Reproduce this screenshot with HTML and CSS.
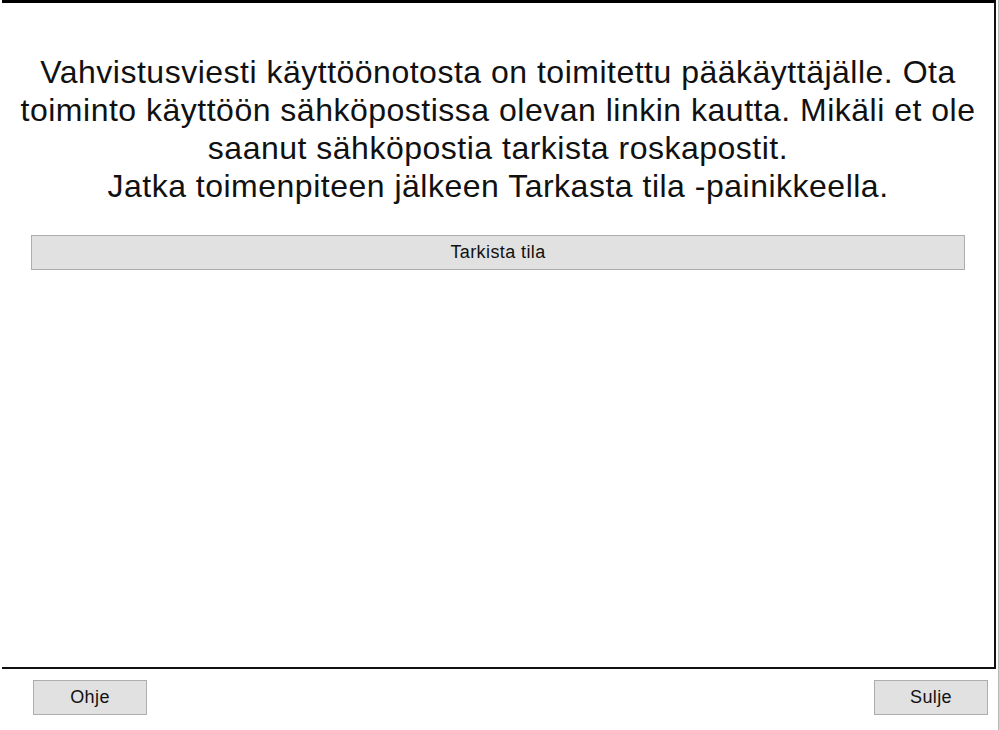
FILE: index.html
```html
<!DOCTYPE html>
<html lang="fi">
<head>
<meta charset="utf-8">
<title>Vahvistus</title>
<link rel="stylesheet" href="styles.css">
</head>
<body>
<div class="window">
  <div class="panel">
    <p class="message">Vahvistusviesti käyttöönotosta on toimitettu pääkäyttäjälle. Ota toiminto käyttöön sähköpostissa olevan linkin kautta. Mikäli et ole saanut sähköpostia tarkista roskapostit.<br>Jatka toimenpiteen jälkeen Tarkasta tila -painikkeella.</p>
    <button class="btn btn-wide" type="button">Tarkista tila</button>
  </div>
  <div class="footer">
    <button class="btn btn-small" type="button">Ohje</button>
    <button class="btn btn-small" type="button">Sulje</button>
  </div>
</div>
</body>
</html>
```

FILE: styles.css
```css
html, body {
  margin: 0;
  padding: 0;
  background: #fff;
}

body {
  font-family: "Liberation Sans", Arial, sans-serif;
  color: #000;
}

.window {
  width: 999px;
  height: 730px;
  box-sizing: border-box;
  border-right: 1px solid #b8b8b8;
  display: flex;
  flex-direction: column;
}

.panel {
  margin-left: 2px;
  width: 994px;
  height: 669px;
  box-sizing: border-box;
  border-top: 3px solid #000;
  border-right: 2px solid #111;
  border-bottom: 2px solid #111;
  display: flex;
  flex-direction: column;
  align-items: center;
  padding-top: 50px;
}

.message {
  margin: 0;
  padding: 0 14px;
  font-size: 32px;
  line-height: 38px;
  letter-spacing: 0.5px;
  text-align: center;
  color: #111;
}

.btn {
  font-family: "Liberation Sans", Arial, sans-serif;
  font-size: 18px;
  letter-spacing: 0.4px;
  color: #111;
  background: #e1e1e1;
  border: 1px solid #adadad;
  border-radius: 0;
  padding: 0;
  box-sizing: border-box;
  height: 35px;
}

.btn-wide {
  margin-top: 30px;
  width: 934px;
}

.footer {
  display: flex;
  justify-content: space-between;
  padding: 11px 10px 0 33px;
}

.btn-small {
  width: 114px;
}
```
